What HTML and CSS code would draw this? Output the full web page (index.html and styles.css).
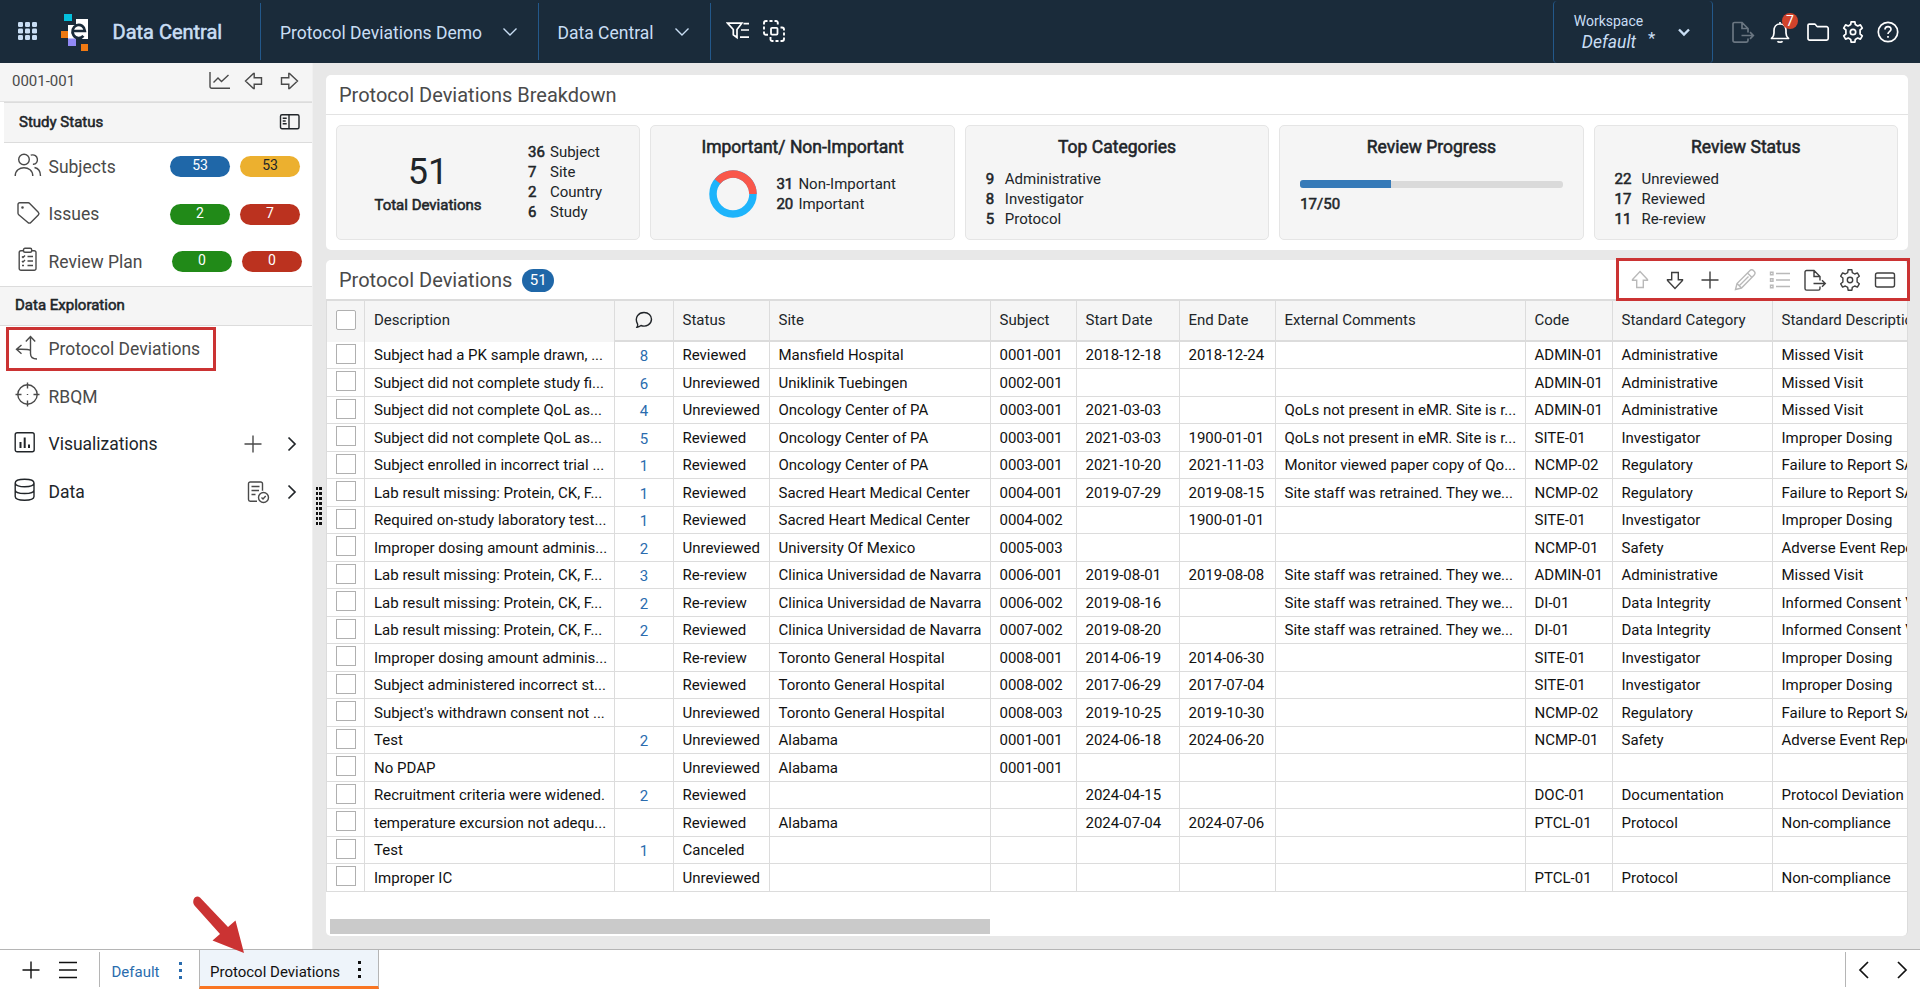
FILE: index.html
```html
<!DOCTYPE html>
<html lang="en">
<head>
<meta charset="utf-8">
<title>Data Central</title>
<link rel="stylesheet" href="styles.css">
</head>
<body>
<svg class="sprite" width="0" height="0">
  <symbol id="gear" viewBox="0 0 24 24"><path stroke-linejoin="round" d="M9.700 4.600 10.100 1.800h3.800l.4 2.800 2.400 1.400 2.700-1.100 1.900 3.300-2.200 1.800v4l2.200 1.800-1.900 3.300-2.700-1.100-2.400 1.400-.4 2.800h-3.800l-.4-2.800L7.300 18l-2.700 1.100-1.900-3.300L4.900 14v-4L2.700 8.200l1.900-3.300L7.300 6z"/><circle cx="12" cy="12" r="2.700"/></symbol>
  <symbol id="export" viewBox="0 0 24 24"><path d="M17 18.500v2a1.600 1.600 0 0 1-1.600 1.600H3.600A1.600 1.600 0 0 1 2 20.500V4.100A1.600 1.600 0 0 1 3.600 2.500H11l6 6v4M11 2.500v6h6M10.500 15.500h11.500M19 12.200l3.300 3.300-3.300 3.300"/></symbol>
  <symbol id="plus" viewBox="0 0 24 24"><path d="M12 3.500v17M3.500 12h17"/></symbol>
  <symbol id="arrow" viewBox="0 0 24 24"><path d="M12 20.500 4.500 12.500v-.7h4.200V4.500h6.600v7.300h4.200v.7z"/></symbol>
  <symbol id="chev" viewBox="0 0 16 16"><path d="m1.500 4.500 6.500 6.500 6.500-6.500"/></symbol>
</svg>

<header class="topbar">
  <div class="brand">
    <svg class="waffle" width="20" height="20" viewBox="0 0 20 20"><g><rect x="1" y="1" width="5" height="5" rx="1.300"/><rect x="8" y="1" width="5" height="5" rx="1.300"/><rect x="15" y="1" width="5" height="5" rx="1.300"/><rect x="1" y="7.500" width="5" height="5" rx="1.300"/><rect x="8" y="7.500" width="5" height="5" rx="1.300"/><rect x="15" y="7.500" width="5" height="5" rx="1.300"/><rect x="1" y="14" width="5" height="5" rx="1.300"/><rect x="8" y="14" width="5" height="5" rx="1.300"/><rect x="15" y="14" width="5" height="5" rx="1.300"/></g></svg>
    <svg class="logo" width="28" height="38" viewBox="0 0 28 38">
      <path fill="#fff" d="M7 11h8V5h12v20H7z"/>
      <rect x="3" y="0" width="8" height="7" fill="#04bfdc"/>
      <rect x="0" y="17" width="7" height="7" fill="#f07a13"/>
      <rect x="7" y="24.500" width="8" height="7.500" fill="#9189f5"/>
      <rect x="20" y="30" width="7" height="7" fill="#f07a13"/>
      <path fill="none" stroke="#1a2b3a" stroke-width="2.700" d="M11.500 17h12.400a6.200 6.600 0 1 0-1.500 4.800"/>
    </svg>
    <span class="brand-name faux">Data Central</span>
  </div>
  <div class="pick pick-study"><span>Protocol Deviations Demo</span><svg width="16" height="16"><use href="#chev"/></svg></div>
  <div class="pick pick-app"><span>Data Central</span><svg width="16" height="16"><use href="#chev"/></svg></div>
  <div class="filters">
    <svg width="24" height="24" viewBox="0 0 24 24"><path stroke-width="1.700" d="M1.500 4.200h14.300L11 10.500v8l-3.700-2.700v-5.300zM17.500 4.700H23M15 11h8M14 18.200h9"/></svg>
    <svg width="24" height="24" viewBox="0 0 24 24"><path stroke-width="1.900" d="M2 5.500V4a2 2 0 0 1 2-2h1.500M7.500 2h3M12.500 2H14a1.800 1.800 0 0 1 1.800 2v1.500M2 7.500v3M2 12.500V14a2 2 0 0 0 2 1.800h2M18.500 8.500H20a2 2 0 0 1 2 2v1M22 13.500v3M22 18.500V20a2 2 0 0 1-2 2h-1.500M16.500 22h-3M11.500 22h-1.200a1.800 1.800 0 0 1-1.800-1.800V18"/><rect stroke-width="1.800" x="9" y="8.800" width="6.500" height="6.800" rx="1"/></svg>
  </div>
  <div class="workspace">
    <div class="ws-text"><span class="ws-label">Workspace</span><span class="ws-name">Default</span></div>
    <span class="ws-star">*</span>
    <svg width="16" height="16" viewBox="0 0 16 16"><path d="m3 5.500 5 5 5-5"/></svg>
  </div>
  <div class="actions">
    <svg class="dim" width="24" height="24"><use href="#export"/></svg>
    <span class="bell"><svg width="24" height="24" viewBox="0 0 24 24"><path stroke-linejoin="round" d="M3.500 18.500c1.800-1.500 2.500-3 2.500-5.500v-2.500c0-3.500 2-6.500 6-6.500s6 3 6 6.500V13c0 2.500.7 4 2.500 5.500zM12 2v2M9.500 21.200c.8 1.200 4.200 1.200 5 0"/></svg><b class="alert">7</b></span>
    <svg width="24" height="24" viewBox="0 0 24 24"><path d="M2 18.500V5.300a1.200 1.200 0 0 1 1.200-1.200h5.600c.9 0 1.700 2.600 2.600 2.600h9a1.800 1.800 0 0 1 1.800 1.800v10a1.600 1.600 0 0 1-1.600 1.600H3.600A1.600 1.600 0 0 1 2 18.500z"/></svg>
    <svg width="24" height="24"><use href="#gear"/></svg>
    <svg width="24" height="24" viewBox="0 0 24 24"><circle cx="12" cy="12" r="9.700"/><path d="M9 9.600c0-4 6-4 6-.3 0 2.500-3 2.200-3 4.700M12 16v1.800"/></svg>
  </div>
</header>

<div class="body">
  <aside class="side">
    <div class="side-top"><span>0001-001</span>
      <svg width="22" height="22" viewBox="0 0 22 22"><path d="M1 2v14.500a1.700 1.700 0 0 0 1.700 1.700H21M4.500 12.500l4.500-4.500 3.500 3.500L19.500 5"/></svg>
      <svg width="24" height="24" viewBox="0 0 24 24"><use href="#arrow" transform="rotate(90 12 12)"/></svg>
      <svg width="24" height="24" viewBox="0 0 24 24"><use href="#arrow" transform="rotate(-90 12 12)"/></svg>
    </div>
    <div class="side-head status"><span class="faux">Study Status</span>
      <svg class="dark" width="22" height="18" viewBox="0 0 22 18"><rect x="1.500" y="1.700" width="18.500" height="14" rx="1.500"/><path d="M10 1.700v14M3.700 5.200h4M3.700 8h3M3.700 10.800h4"/></svg></div>
    <div class="item"><span class="ic"><svg width="28" height="26" viewBox="0 0 28 26"><circle cx="10" cy="7.500" r="5.300"/><path d="M1.200 24c0-11 17.600-11 17.600 0M16.700 3.200c8-2.500 9 9.500 2.200 9M20.500 15.500c4 .8 6 4.200 6 8.500"/></svg></span><span class="lbl">Subjects</span><b class="pill blue">53</b><b class="pill amber">53</b></div>
    <div class="item"><span class="ic"><svg width="28" height="26" viewBox="0 0 28 26"><path d="M4 4.500A1.700 1.700 0 0 1 5.700 2.800h8.600a2 2 0 0 1 1.400.6l8.600 8.800a2 2 0 0 1 0 2.800l-7.500 7.500a2 2 0 0 1-2.900 0L4.700 14.700a2 2 0 0 1-.7-1.400z"/><circle cx="8.500" cy="7.500" r=".6"/></svg></span><span class="lbl">Issues</span><b class="pill green">2</b><b class="pill red">7</b></div>
    <div class="item plan"><span class="ic"><svg width="28" height="26" viewBox="0 0 28 26"><path d="M9.500 3.800H7A1.800 1.800 0 0 0 5.200 5.600v15.800A1.800 1.800 0 0 0 7 23.200h13.200a1.800 1.800 0 0 0 1.800-1.800V5.600a1.800 1.800 0 0 0-1.800-1.800h-2.500M13.500 9.500h5.500M13.500 14h5.500M13.500 18.500h5.500M8 9.500l1 1 2-2M8 14l1 1 2-2M8 18.500h2"/><rect x="9.500" y="1.200" width="8.200" height="4" rx="1.500"/></svg></span><span class="lbl">Review Plan</span><b class="pill green">0</b><b class="pill red">0</b></div>
    <div class="side-head explore"><span class="faux">Data Exploration</span></div>
    <div class="item marked"><span class="ic"><svg width="28" height="26" viewBox="0 0 28 26"><path d="M16.500 2v16.500c0 3.300 2.500 5.500 6.500 5.500M11.800 6.500 16.500 1.500l4.700 5M16.500 15.500c-2-1.500-5-1.200-14-1.200M7.500 10l-5 4.300 5 4.500"/></svg></span><span class="lbl">Protocol Deviations</span></div>
    <div class="item"><span class="ic"><svg width="28" height="26" viewBox="0 0 28 26"><circle cx="13.500" cy="12.500" r="9.700"/><path d="M13.500.5v6M13.500 18.500v6M1.500 12.500h6M19.500 12.500h6M13.500 12v1"/></svg></span><span class="lbl">RBQM</span></div>
    <div class="item strong"><span class="ic"><svg width="28" height="26" viewBox="0 0 28 26"><rect x="1.200" y="2.800" width="19" height="19" rx="2"/><path stroke-width="2" d="M6.500 12v6M10.700 7.500V18M15 14.500V18"/></svg></span><span class="lbl">Visualizations</span><svg class="thin add" width="24" height="24"><use href="#plus"/></svg><svg class="go" width="16" height="16" viewBox="0 0 16 16"><path d="m4.500 1.500 6.500 6.500-6.500 6.500"/></svg></div>
    <div class="item strong"><span class="ic"><svg width="28" height="26" viewBox="0 0 28 26"><path d="M1.200 6c0-5 18.800-5 18.800 0s-18.800 5-18.800 0zM1.200 6v13.500c0 5 18.800 5 18.800 0V6M1.200 13c0 4.700 18.800 4.700 18.800 0"/></svg></span><span class="lbl">Data</span><svg class="thin doc" width="24" height="24" viewBox="0 0 24 24"><path d="M11 21.200H4.200a1.700 1.700 0 0 1-1.700-1.700V3.700A1.700 1.700 0 0 1 4.200 2h10.600a1.700 1.700 0 0 1 1.700 1.700v7M5.500 6.500h8M5.500 10.500h7.500M5.500 14.500h4"/><circle cx="17.500" cy="17.500" r="5"/><path d="m15.500 17.500 1.500 1.500 2.700-3"/></svg><svg class="go" width="16" height="16" viewBox="0 0 16 16"><path d="m4.500 1.500 6.500 6.500-6.500 6.500"/></svg></div>
  </aside>
  <div class="gutter"><i class="grip"></i></div>

  <main class="main">
    <section class="panel">
      <h2 class="panel-title">Protocol Deviations Breakdown</h2>
      <div class="cards">
        <div class="card total">
          <div class="sum"><span class="big">51</span><b class="faux">Total Deviations</b></div>
          <dl class="kv"><dt>36</dt><dd>Subject</dd><dt>7</dt><dd>Site</dd><dt>2</dt><dd>Country</dd><dt>6</dt><dd>Study</dd></dl>
        </div>
        <div class="card">
          <h3>Important/ Non-Important</h3>
          <div class="ring">
            <svg width="48" height="48" viewBox="0 0 48 48"><circle cx="24" cy="24" r="20" stroke="#1eb4fb"/><path stroke="#f9574b" d="M44 24A20 20 0 0 0 8.500 11.500"/></svg>
            <dl class="kv"><dt>31</dt><dd>Non-Important</dd><dt>20</dt><dd>Important</dd></dl>
          </div>
        </div>
        <div class="card">
          <h3>Top Categories</h3>
          <dl class="kv list cat"><dt>9</dt><dd>Administrative</dd><dt>8</dt><dd>Investigator</dd><dt>5</dt><dd>Protocol</dd></dl>
        </div>
        <div class="card">
          <h3>Review Progress</h3>
          <div class="bar"><i></i></div>
          <b class="ratio faux">17/50</b>
        </div>
        <div class="card">
          <h3>Review Status</h3>
          <dl class="kv list stat"><dt>22</dt><dd>Unreviewed</dd><dt>17</dt><dd>Reviewed</dd><dt>11</dt><dd>Re-review</dd></dl>
        </div>
      </div>
    </section>

    <section class="panel grid-panel">
      <div class="grid-head">
        <h2 class="panel-title">Protocol Deviations</h2><b class="count">51</b>
        <div class="tools">
          <svg class="off" width="24" height="24" viewBox="0 0 24 24"><use href="#arrow" transform="rotate(180 12 12)"/></svg>
          <svg width="24" height="24"><use href="#arrow"/></svg>
          <svg width="24" height="24"><use href="#plus"/></svg>
          <svg class="off" width="24" height="24" viewBox="0 0 24 24"><path d="M2.500 21.500 4 15.500 16.500 3a3 3 0 0 1 4.500 4.300L8.500 20zM4 15.500l4.500 4.500M14.500 5l4.500 4.500M6.500 17.500l9-9"/></svg>
          <svg class="off" width="24" height="24" viewBox="0 0 24 24"><path d="M8 5.500h14M8 12h14M8 18.500h14"/><path d="M2.500 4.200h2.500v2.500H2.500zM2.500 10.700h2.500v2.500H2.500zM2.500 17.200h2.500v2.500H2.500z"/></svg>
          <svg width="24" height="24"><use href="#export"/></svg>
          <svg width="24" height="24"><use href="#gear"/></svg>
          <svg width="24" height="24" viewBox="0 0 24 24"><rect x="2.500" y="5" width="19" height="14" rx="2"/><path d="M2.500 10h19"/></svg>
        </div>
      </div>
      <table class="tbl">
        <thead><tr><th><i class="box round"></i></th><th>Description</th><th class="n"><svg width="18" height="18" viewBox="0 0 18 18"><path d="M2 16.200c.8-1.500 1-2 .5-3.300C-1 6 4 1.500 9 1.500c4.500 0 7.500 3 7.500 6.800 0 4.500-5 8.200-10.500 6.200-1 .8-2 1.500-4 1.700z"/></svg></th><th>Status</th><th>Site</th><th>Subject</th><th>Start Date</th><th>End Date</th><th>External Comments</th><th>Code</th><th>Standard Category</th><th>Standard Description</th></tr></thead>
        <tbody>
<tr><td><i class="box"></i></td><td>Subject had a PK sample drawn, ...</td><td>8</td><td>Reviewed</td><td>Mansfield Hospital</td><td>0001-001</td><td>2018-12-18</td><td>2018-12-24</td><td></td><td>ADMIN-01</td><td>Administrative</td><td>Missed Visit</td></tr>
<tr><td><i class="box"></i></td><td>Subject did not complete study fi...</td><td>6</td><td>Unreviewed</td><td>Uniklinik Tuebingen</td><td>0002-001</td><td></td><td></td><td></td><td>ADMIN-01</td><td>Administrative</td><td>Missed Visit</td></tr>
<tr><td><i class="box"></i></td><td>Subject did not complete QoL as...</td><td>4</td><td>Unreviewed</td><td>Oncology Center of PA</td><td>0003-001</td><td>2021-03-03</td><td></td><td>QoLs not present in eMR. Site is r...</td><td>ADMIN-01</td><td>Administrative</td><td>Missed Visit</td></tr>
<tr><td><i class="box"></i></td><td>Subject did not complete QoL as...</td><td>5</td><td>Reviewed</td><td>Oncology Center of PA</td><td>0003-001</td><td>2021-03-03</td><td>1900-01-01</td><td>QoLs not present in eMR. Site is r...</td><td>SITE-01</td><td>Investigator</td><td>Improper Dosing</td></tr>
<tr><td><i class="box"></i></td><td>Subject enrolled in incorrect trial ...</td><td>1</td><td>Reviewed</td><td>Oncology Center of PA</td><td>0003-001</td><td>2021-10-20</td><td>2021-11-03</td><td>Monitor viewed paper copy of Qo...</td><td>NCMP-02</td><td>Regulatory</td><td>Failure to Report SAE</td></tr>
<tr><td><i class="box"></i></td><td>Lab result missing: Protein, CK, F...</td><td>1</td><td>Reviewed</td><td>Sacred Heart Medical Center</td><td>0004-001</td><td>2019-07-29</td><td>2019-08-15</td><td>Site staff was retrained. They we...</td><td>NCMP-02</td><td>Regulatory</td><td>Failure to Report SAE</td></tr>
<tr><td><i class="box"></i></td><td>Required on-study laboratory test...</td><td>1</td><td>Reviewed</td><td>Sacred Heart Medical Center</td><td>0004-002</td><td></td><td>1900-01-01</td><td></td><td>SITE-01</td><td>Investigator</td><td>Improper Dosing</td></tr>
<tr><td><i class="box"></i></td><td>Improper dosing amount adminis...</td><td>2</td><td>Unreviewed</td><td>University Of Mexico</td><td>0005-003</td><td></td><td></td><td></td><td>NCMP-01</td><td>Safety</td><td>Adverse Event Reporting</td></tr>
<tr><td><i class="box"></i></td><td>Lab result missing: Protein, CK, F...</td><td>3</td><td>Re-review</td><td>Clinica Universidad de Navarra</td><td>0006-001</td><td>2019-08-01</td><td>2019-08-08</td><td>Site staff was retrained. They we...</td><td>ADMIN-01</td><td>Administrative</td><td>Missed Visit</td></tr>
<tr><td><i class="box"></i></td><td>Lab result missing: Protein, CK, F...</td><td>2</td><td>Re-review</td><td>Clinica Universidad de Navarra</td><td>0006-002</td><td>2019-08-16</td><td></td><td>Site staff was retrained. They we...</td><td>DI-01</td><td>Data Integrity</td><td>Informed Consent Version</td></tr>
<tr><td><i class="box"></i></td><td>Lab result missing: Protein, CK, F...</td><td>2</td><td>Reviewed</td><td>Clinica Universidad de Navarra</td><td>0007-002</td><td>2019-08-20</td><td></td><td>Site staff was retrained. They we...</td><td>DI-01</td><td>Data Integrity</td><td>Informed Consent Version</td></tr>
<tr><td><i class="box"></i></td><td>Improper dosing amount adminis...</td><td></td><td>Re-review</td><td>Toronto General Hospital</td><td>0008-001</td><td>2014-06-19</td><td>2014-06-30</td><td></td><td>SITE-01</td><td>Investigator</td><td>Improper Dosing</td></tr>
<tr><td><i class="box"></i></td><td>Subject administered incorrect st...</td><td></td><td>Reviewed</td><td>Toronto General Hospital</td><td>0008-002</td><td>2017-06-29</td><td>2017-07-04</td><td></td><td>SITE-01</td><td>Investigator</td><td>Improper Dosing</td></tr>
<tr><td><i class="box"></i></td><td>Subject's withdrawn consent not ...</td><td></td><td>Unreviewed</td><td>Toronto General Hospital</td><td>0008-003</td><td>2019-10-25</td><td>2019-10-30</td><td></td><td>NCMP-02</td><td>Regulatory</td><td>Failure to Report SAE</td></tr>
<tr><td><i class="box"></i></td><td>Test</td><td>2</td><td>Unreviewed</td><td>Alabama</td><td>0001-001</td><td>2024-06-18</td><td>2024-06-20</td><td></td><td>NCMP-01</td><td>Safety</td><td>Adverse Event Reporting</td></tr>
<tr><td><i class="box"></i></td><td>No PDAP</td><td></td><td>Unreviewed</td><td>Alabama</td><td>0001-001</td><td></td><td></td><td></td><td></td><td></td><td></td></tr>
<tr><td><i class="box"></i></td><td>Recruitment criteria were widened.</td><td>2</td><td>Reviewed</td><td></td><td></td><td>2024-04-15</td><td></td><td></td><td>DOC-01</td><td>Documentation</td><td>Protocol Deviation</td></tr>
<tr><td><i class="box"></i></td><td>temperature excursion not adequ...</td><td></td><td>Reviewed</td><td>Alabama</td><td></td><td>2024-07-04</td><td>2024-07-06</td><td></td><td>PTCL-01</td><td>Protocol</td><td>Non-compliance</td></tr>
<tr><td><i class="box"></i></td><td>Test</td><td>1</td><td>Canceled</td><td></td><td></td><td></td><td></td><td></td><td></td><td></td><td></td></tr>
<tr><td><i class="box"></i></td><td>Improper IC</td><td></td><td>Unreviewed</td><td></td><td></td><td></td><td></td><td></td><td>PTCL-01</td><td>Protocol</td><td>Non-compliance</td></tr>
        </tbody>
      </table>
      <div class="hscroll"></div>
    </section>
  </main>
</div>

<footer class="tabs">
  <div class="tab-tools"><svg width="24" height="24"><use href="#plus"/></svg><svg width="24" height="24" viewBox="0 0 24 24"><path d="M3 4.500h18M3 12h18M3 19.500h18"/></svg></div>
  <div class="tab"><span>Default</span><i class="dots"></i></div>
  <div class="tab active"><span>Protocol Deviations</span><i class="dots"></i></div>
  <div class="pager"><svg width="24" height="24" viewBox="0 0 24 24"><path d="m16 4-8 8 8 8"/></svg><svg width="24" height="24" viewBox="0 0 24 24"><path d="m8 4 8 8-8 8"/></svg></div>
</footer>
<svg class="pointer" width="56" height="62" viewBox="0 0 56 62"><path fill="#cb3333" d="M10 3.500 38 33l7.500-6.500L54 59 22.500 46.500l7.500-6.500L4.500 11.500C1 6.500 5.500 0 10 3.500z"/></svg>
</body>
</html>
```

FILE: styles.css
```css
* { box-sizing: border-box; }
body { margin: 0; height: 989px; display: flex; flex-direction: column; overflow: hidden; font: 15px/20px Roboto, sans-serif; color: #212529; background: #fff; }
svg { fill: none; stroke: currentColor; stroke-width: 1.4; flex: none; }
.sprite { position: absolute; }
h2, h3, dl, dd { margin: 0; font-weight: 400; }
b, i { font-weight: 400; font-style: normal; }
.faux, .kv dt, .card h3 { font-weight: 400; -webkit-text-stroke: 0.55px currentColor; }

/* top bar */
.topbar { height: 63px; flex: none; display: flex; align-items: center; background: #1a2b3a; color: #c9def4; font-size: 17.5px; }
.topbar > div { display: flex; align-items: center; }
.brand { width: 260px; padding-left: 17px; }
.waffle { fill: #c9def4; stroke: none; margin-top: -2px; }
.logo { stroke: none; margin: 3px 0 0 24px; }
.brand-name { font-size: 20px; margin: 1px 0 0 23.5px; }
.pick { height: 57px; border-left: 1px solid #23588a; justify-content: space-between; padding: 3px 20px 0 19px; }
.pick svg { margin-top: -2px; }
.pick-study { width: 278px; }
.pick-app { width: 172px; padding-left: 18.5px; }
.filters { height: 57px; border-left: 1px solid #23588a; padding-left: 15px; gap: 12px; color: #fff; }
.filters svg { margin-top: -2px; }
.workspace { margin-left: auto; width: 160px; height: 62px; border: solid #23588a; border-width: 0 1px; border-radius: 4px; padding-left: 19px; }
.ws-text { display: flex; flex-direction: column; align-items: center; width: 71px; padding-top: 2px; }
.ws-label { font-size: 14px; line-height: 20px; }
.ws-name { font-style: italic; line-height: 23px; margin-right: -1px; }
.ws-star { font-size: 17px; margin: 12px 0 0 4px; }
.workspace svg { stroke-width: 2.4; margin: 1px 0 0 21px; }
.actions { width: 207px; padding-left: 18px; gap: 12px; color: #fff; }
.actions svg { stroke-width: 1.7; display: block; }
.actions .dim { color: #6a7681; }
.bell { position: relative; margin-left: 1px; }
.alert { position: absolute; left: 14px; top: -7px; width: 16px; height: 16px; border-radius: 8px; background: #d0432b; font-size: 14px; line-height: 16px; text-align: center; }
.bell + svg { margin-left: 2px; }
.bell + svg + svg { margin-left: -1px; }
.actions svg:last-child { margin-left: -1px; }

.body { flex: 1; min-height: 0; display: flex; background: #e8e8e8; }

/* sidebar */
.side { width: 313px; background: #fff; border-right: 1px solid #f0f0f0; color: #4a4a4a; display: flex; flex-direction: column; }
.side-top { height: 39px; flex: none; background: #f5f5f5; border-bottom: 1px solid #e3e3e3; display: flex; align-items: center; padding: 0 11px 2px 12px; gap: 11px; }
.side-top span { margin-right: auto; }
.side-head { flex: none; display: flex; align-items: center; justify-content: space-between; background: #f5f5f5; border: solid #dcdcdc; border-width: 1px 0; color: #212529; padding: 0 11px 2px 15px; }
.status { height: 41px; margin: 0 0 0 4px; }
.dark { color: #212529; }
.explore { height: 40px; }
.item { height: 47.5px; flex: none; display: flex; align-items: center; padding: 0 12px 0 13.5px; font-size: 17.5px; }
.ic { width: 35px; display: flex; margin-top: -3px; }
.lbl { margin-right: auto; }
.strong { color: #212529; }
.thin { color: #4a4a4a; }
.add { margin-right: -1px; }
.doc { margin-right: -6px; }
.item .go { stroke-width: 1.7; margin-left: 20px; }
.pill { width: 60px; height: 21px; border-radius: 10.5px; color: #fff; font-size: 14px; line-height: 19px; text-align: center; margin-left: 10px; }
.plan .pill { position: relative; left: 2px; }
.blue { background: #1f67a8; }
.amber { background: #ecb02f; color: #212529; }
.green { background: #218a18; }
.red { background: #bb321f; }
.marked { position: relative; }
.marked::after { content: ""; box-sizing: border-box; position: absolute; left: 6px; top: 1.5px; width: 210px; height: 44px; border: 3px solid #cb3333; }

.gutter { width: 13px; display: flex; align-items: center; padding-left: 3px; }
.grip { width: 6px; height: 38px; background: repeating-linear-gradient(#111 0 3px, transparent 3px 5px); -webkit-mask: linear-gradient(90deg, #000 0 2.5px, transparent 2.5px 3.5px, #000 3.5px); }

/* panels */
.main { flex: 1; min-width: 0; display: flex; flex-direction: column; gap: 10px; padding: 12px 12px 13px 0; }
.panel { background: #fff; border-radius: 5px; }
.panel-title { font-size: 20px; line-height: 39px; color: #4a4a4a; padding: 1px 13px 0; height: 39px; }
.cards { border-top: 1px solid #e3e3e3; padding: 10px; display: grid; grid-template-columns: repeat(5, 1fr); gap: 10px; height: 136px; }
.card { background: #f5f5f5; border: 1px solid #e5e5e5; border-radius: 5px; }
.card h3 { font-size: 17.5px; text-align: center; padding-top: 10px; line-height: 22px; }
.kv { display: grid; grid-template-columns: 22px auto; line-height: 20px; align-content: start; }
.total { display: flex; }
.sum { width: 182px; display: flex; flex-direction: column; align-items: center; padding-top: 26px; }
.big { font-size: 36px; line-height: 40px; }
.sum b { margin-top: 3px; }
.total .kv { margin: 16px 0 0 9px; }
.ring { display: flex; align-items: center; padding-left: 57.5px; gap: 19.5px; margin-top: 12px; }
.ring svg { stroke-width: 7.5; }
.ring .kv { margin-top: 0; }
.list { margin: 11px 0 0 20px; }
.stat { grid-template-columns: 27px auto; }
.cat { grid-template-columns: 19px auto; }
.bar { height: 7px; margin: 23px 20px 0; border-radius: 3px; background: #dadada; display: flex; align-items: flex-end; }
.bar i { width: 34.5%; height: 8px; background: #367ab8; border-radius: 3px 0 0 3px; }
.ratio { display: block; margin: 6px 0 0 20px; }

/* grid */
.grid-panel { flex: 1; min-height: 0; display: flex; flex-direction: column; border-right: 1px solid #dcdcdc; }
.grid-head { height: 39px; flex: none; display: flex; align-items: center; }
.grid-head .panel-title { padding-right: 10px; }
.count { width: 32px; height: 23px; border-radius: 11.5px; background: #1f67a8; color: #fff; text-align: center; line-height: 22px; margin-top: 1px; }
.tools { margin: 0 -3px 0 auto; width: 294px; height: 43px; border: 3px solid #cb3333; display: flex; align-items: center; gap: 11px; padding-left: 9px; color: #3f3f3f; position: relative; }
.off { color: #b9b9b9; }
.tbl { display: block; border: solid #dcdcdc; border-width: 1px 0 0 1px; overflow: hidden; }
thead, tbody { display: block; }
.tbl tr { display: grid; grid-template-columns: 38px 250px 59px 96px 221px 86px 103px 96px 250px 87px 160px 135px; height: 27.5px; }
.tbl thead tr { height: 41.5px; background: #f5f5f5; }
.tbl th, .tbl td { min-width: 0; overflow: hidden; white-space: nowrap; text-align: left; font-weight: 400; padding: 3.5px 0 0 9px; border: solid #dcdcdc; border-width: 0 1px 1px 0; color: #111; }
.tbl th { padding-top: 9px; color: #212529; border-top: 1px solid #dcdcdc; border-bottom-width: 2px; }
.tbl th:nth-child(n+4), .tbl td:nth-child(n+4) { padding-left: 8.5px; }
.tbl th:nth-child(-n+2) { border-bottom: 0; }
.tbl tr > :last-child { border-right: 0; }
.tbl td:nth-child(3) { text-align: center; padding: 4.5px 0 0; color: #2a6cae; }
.tbl th.n { text-align: center; padding: 10px 0 0; }
.box { display: block; width: 20px; height: 20px; border: 1px solid #b0b0b0; background: #fff; margin-top: -1.1px; }
.round { border-radius: 2px; margin-top: 0; }
.hscroll { width: 660px; height: 15px; background: #cacaca; margin: auto 0 2px 4px; }

/* bottom tabs */
.tabs { height: 40px; flex: none; display: flex; border-top: 1px solid #b5b5b5; background: #fff; }
.tab-tools { width: 99px; display: flex; align-items: center; padding-left: 19px; gap: 13px; color: #111; }
.tab { display: flex; align-items: center; width: 100px; padding: 5px 17px 0 12.5px; justify-content: space-between; color: #2a6cae; background: linear-gradient(#b5b5b5, #b5b5b5) 0 2px / 1px 35px no-repeat; }
.tab.active { width: 180px; height: 39px; background: #eef4fa; color: #111; border: solid #b5b5b5; border-width: 0 1px; border-bottom: 3px solid #f97522; padding: 6px 17px 0 10px; }
.active span { position: relative; top: 1px; }
.dots { width: 3px; height: 17px; margin-top: -4px; background: repeating-linear-gradient(currentColor 0 3px, transparent 3px 7px); }
.pager { margin-left: auto; width: 75px; display: flex; align-items: center; padding: 0 0 0 7px; gap: 14px; color: #111; background: linear-gradient(#b5b5b5, #b5b5b5) 0 2px / 1px 35px no-repeat; }
.pager svg { stroke-width: 1.7; }
.pointer { position: absolute; left: 190px; top: 894px; stroke: none; }
```
